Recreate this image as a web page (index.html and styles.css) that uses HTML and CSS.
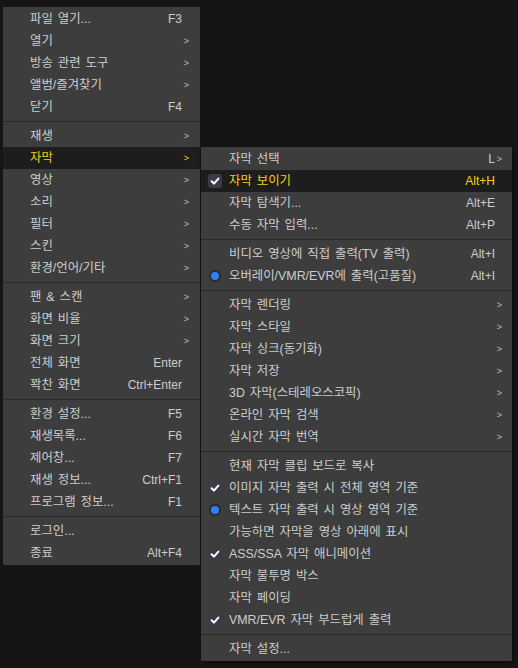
FILE: index.html
```html
<!DOCTYPE html>
<html lang="ko">
<head>
<meta charset="utf-8">
<link rel="stylesheet" href="styles.css">
</head>
<body>
<div class="screen">
  <div class="menu main">
    <div class="item"><span class="label">파일 열기...</span><span class="key">F3</span><span class="arrow"></span></div>
    <div class="item"><span class="label">열기</span><span class="key"></span><span class="arrow">&gt;</span></div>
    <div class="item"><span class="label">방송 관련 도구</span><span class="key"></span><span class="arrow">&gt;</span></div>
    <div class="item"><span class="label">앨범/즐겨찾기</span><span class="key"></span><span class="arrow">&gt;</span></div>
    <div class="item"><span class="label">닫기</span><span class="key">F4</span><span class="arrow"></span></div>
    <div class="sep"></div>
    <div class="item"><span class="label">재생</span><span class="key"></span><span class="arrow">&gt;</span></div>
    <div class="item active has-sub"><span class="label">자막</span><span class="key"></span><span class="arrow">&gt;</span>
      <div class="menu sub">
        <div class="item"><span class="mark"></span><span class="label">자막 선택</span><span class="key">L</span><span class="arrow">&gt;</span></div>
        <div class="item active"><span class="mark"><span class="check"><svg viewBox="0 0 14 14" width="14" height="14"><polyline points="3.6,7.2 6,9.6 10.4,4.6" fill="none" stroke="#ffffff" stroke-width="2" stroke-linecap="round" stroke-linejoin="round"/></svg></span></span><span class="label">자막 보이기</span><span class="key">Alt+H</span><span class="arrow"></span></div>
        <div class="item"><span class="mark"></span><span class="label">자막 탐색기...</span><span class="key">Alt+E</span><span class="arrow"></span></div>
        <div class="item"><span class="mark"></span><span class="label">수동 자막 입력...</span><span class="key">Alt+P</span><span class="arrow"></span></div>
        <div class="sep"></div>
        <div class="item"><span class="mark"></span><span class="label">비디오 영상에 직접 출력(TV 출력)</span><span class="key">Alt+I</span><span class="arrow"></span></div>
        <div class="item"><span class="mark"><span class="radio"></span></span><span class="label">오버레이/VMR/EVR에 출력(고품질)</span><span class="key">Alt+I</span><span class="arrow"></span></div>
        <div class="sep"></div>
        <div class="item"><span class="mark"></span><span class="label">자막 렌더링</span><span class="key"></span><span class="arrow">&gt;</span></div>
        <div class="item"><span class="mark"></span><span class="label">자막 스타일</span><span class="key"></span><span class="arrow">&gt;</span></div>
        <div class="item"><span class="mark"></span><span class="label">자막 싱크(동기화)</span><span class="key"></span><span class="arrow">&gt;</span></div>
        <div class="item"><span class="mark"></span><span class="label">자막 저장</span><span class="key"></span><span class="arrow">&gt;</span></div>
        <div class="item"><span class="mark"></span><span class="label">3D 자막(스테레오스코픽)</span><span class="key"></span><span class="arrow">&gt;</span></div>
        <div class="item"><span class="mark"></span><span class="label">온라인 자막 검색</span><span class="key"></span><span class="arrow">&gt;</span></div>
        <div class="item"><span class="mark"></span><span class="label">실시간 자막 번역</span><span class="key"></span><span class="arrow">&gt;</span></div>
        <div class="sep"></div>
        <div class="item"><span class="mark"></span><span class="label">현재 자막 클립 보드로 복사</span><span class="key"></span><span class="arrow"></span></div>
        <div class="item"><span class="mark"><span class="check"><svg viewBox="0 0 14 14" width="14" height="14"><polyline points="3.6,7.2 6,9.6 10.4,4.6" fill="none" stroke="#ffffff" stroke-width="2" stroke-linecap="round" stroke-linejoin="round"/></svg></span></span><span class="label">이미지 자막 출력 시 전체 영역 기준</span><span class="key"></span><span class="arrow"></span></div>
        <div class="item"><span class="mark"><span class="radio"></span></span><span class="label">텍스트 자막 출력 시 영상 영역 기준</span><span class="key"></span><span class="arrow"></span></div>
        <div class="item"><span class="mark"></span><span class="label">가능하면 자막을 영상 아래에 표시</span><span class="key"></span><span class="arrow"></span></div>
        <div class="item"><span class="mark"><span class="check"><svg viewBox="0 0 14 14" width="14" height="14"><polyline points="3.6,7.2 6,9.6 10.4,4.6" fill="none" stroke="#ffffff" stroke-width="2" stroke-linecap="round" stroke-linejoin="round"/></svg></span></span><span class="label">ASS/SSA 자막 애니메이션</span><span class="key"></span><span class="arrow"></span></div>
        <div class="item"><span class="mark"></span><span class="label">자막 불투명 박스</span><span class="key"></span><span class="arrow"></span></div>
        <div class="item"><span class="mark"></span><span class="label">자막 페이딩</span><span class="key"></span><span class="arrow"></span></div>
        <div class="item"><span class="mark"><span class="check"><svg viewBox="0 0 14 14" width="14" height="14"><polyline points="3.6,7.2 6,9.6 10.4,4.6" fill="none" stroke="#ffffff" stroke-width="2" stroke-linecap="round" stroke-linejoin="round"/></svg></span></span><span class="label">VMR/EVR 자막 부드럽게 출력</span><span class="key"></span><span class="arrow"></span></div>
        <div class="sep"></div>
        <div class="item"><span class="mark"></span><span class="label">자막 설정...</span><span class="key"></span><span class="arrow"></span></div>
      </div>
    </div>
    <div class="item"><span class="label">영상</span><span class="key"></span><span class="arrow">&gt;</span></div>
    <div class="item"><span class="label">소리</span><span class="key"></span><span class="arrow">&gt;</span></div>
    <div class="item"><span class="label">필터</span><span class="key"></span><span class="arrow">&gt;</span></div>
    <div class="item"><span class="label">스킨</span><span class="key"></span><span class="arrow">&gt;</span></div>
    <div class="item"><span class="label">환경/언어/기타</span><span class="key"></span><span class="arrow">&gt;</span></div>
    <div class="sep"></div>
    <div class="item"><span class="label">팬 &amp; 스캔</span><span class="key"></span><span class="arrow">&gt;</span></div>
    <div class="item"><span class="label">화면 비율</span><span class="key"></span><span class="arrow">&gt;</span></div>
    <div class="item"><span class="label">화면 크기</span><span class="key"></span><span class="arrow">&gt;</span></div>
    <div class="item"><span class="label">전체 화면</span><span class="key">Enter</span><span class="arrow"></span></div>
    <div class="item"><span class="label">꽉찬 화면</span><span class="key">Ctrl+Enter</span><span class="arrow"></span></div>
    <div class="sep"></div>
    <div class="item"><span class="label">환경 설정...</span><span class="key">F5</span><span class="arrow"></span></div>
    <div class="item"><span class="label">재생목록...</span><span class="key">F6</span><span class="arrow"></span></div>
    <div class="item"><span class="label">제어창...</span><span class="key">F7</span><span class="arrow"></span></div>
    <div class="item"><span class="label">재생 정보...</span><span class="key">Ctrl+F1</span><span class="arrow"></span></div>
    <div class="item"><span class="label">프로그램 정보...</span><span class="key">F1</span><span class="arrow"></span></div>
    <div class="sep"></div>
    <div class="item"><span class="label">로그인...</span><span class="key"></span><span class="arrow"></span></div>
    <div class="item"><span class="label">종료</span><span class="key">Alt+F4</span><span class="arrow"></span></div>
  </div>
</div>
</body>
</html>
```
FILE: styles.css
```css
html, body {
  margin: 0;
  padding: 0;
  background: #151515;
}
body {
  width: 518px;
  height: 668px;
  overflow: hidden;
  font-family: "Liberation Sans", "Noto Sans CJK KR", sans-serif;
  font-size: 12px;
  color: #cdcdcd;
}
.screen {
  padding: 7px 0 0 3px;
}
.menu {
  background: #3d3d3d;
  padding: 1px 0;
  box-sizing: border-box;
}
.main {
  width: 197px;
}
.item {
  display: flex;
  align-items: center;
  height: 22px;
  line-height: 22px;
  white-space: nowrap;
  padding-right: 11px;
}
.main > .item {
  padding-left: 27px;
}
.label {
  flex: 1;
  font-size: 12.4px;
  word-spacing: 1.5px;
}
.key {
  text-align: right;
  font-size: 12px;
}
.arrow {
  width: 7px;
  text-align: right;
  font-size: 9px;
  color: #bdbdbd;
}
.item.active {
  background: #1d1d1d;
  color: #f2d20e;
}
.item.active > .arrow {
  color: #f2d20e;
}
.sep {
  height: 1px;
  margin: 3px 0;
  background: #2a2a2a;
}
.has-sub {
  position: relative;
}
.sub {
  position: absolute;
  left: calc(100% + 1px);
  top: 0;
  width: 311px;
  color: #cdcdcd;
  box-shadow: 1px 1px 3px rgba(0, 0, 0, 0.5);
}
.sub > .item {
  padding-left: 7px;
  padding-right: 10px;
}
.mark {
  width: 21px;
  height: 22px;
  display: flex;
  align-items: center;
}
.check {
  width: 14px;
  height: 14px;
  border-radius: 3px;
  background: #2c2d36;
  display: flex;
}
.item.active .check {
  background: #3a3b47;
}
.radio {
  width: 12px;
  height: 12px;
  margin-left: 1px;
  border-radius: 50%;
  background: #2a2a2e;
  display: flex;
  align-items: center;
  justify-content: center;
}
.radio::after {
  content: "";
  width: 8px;
  height: 8px;
  border-radius: 50%;
  background: #2f7ff5;
}
```
